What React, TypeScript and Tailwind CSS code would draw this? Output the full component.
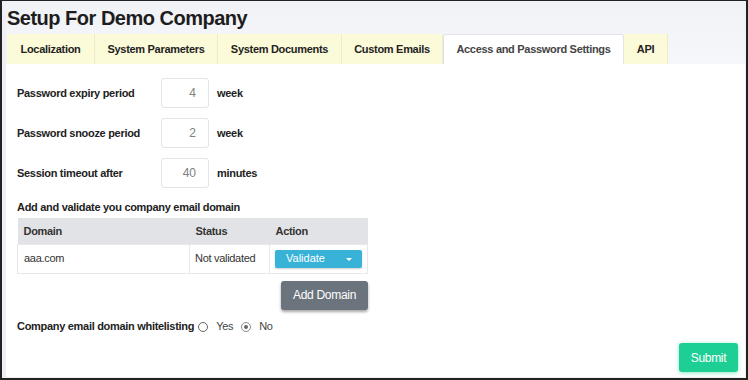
import React from "react";

const TABS = [
  { label: "Localization", w: "w-[88px]" },
  { label: "System Parameters", w: "w-[123px]" },
  { label: "System Documents", w: "w-[124px]" },
  { label: "Custom Emails", w: "w-[101px]" },
  { label: "Access and Password Settings", w: "w-[181px]", active: true },
  { label: "API", w: "w-[44px]" },
];

const PERIODS = [
  { label: "Password expiry period", value: "4", unit: "week" },
  { label: "Password snooze period", value: "2", unit: "week" },
  { label: "Session timeout after", value: "40", unit: "minutes" },
];

export default function App() {
  return (
    <div className="h-[380px] w-[748px] overflow-hidden border-t border-l-2 border-r-2 border-b-2 border-[#222] bg-white font-['Liberation_Sans',Arial,sans-serif] text-[11px] tracking-[-0.3px] text-[#222]">
      <div className="flex h-full border-l-4 border-r border-b border-[#eef0f5]">
        <div className="flex min-w-0 flex-1 flex-col">
          <div className="bg-gradient-to-b from-[#f1f2f5] to-[#f6f7fb] pl-[1px] pt-[4px]">
            <h1 className="text-[20px] font-bold leading-[26px] tracking-[-0.5px] text-[#1d1d1d]">Setup For Demo Company</h1>
            <div className="mt-[3px] flex h-[30px]">
              {TABS.map((t) => (
                <div
                  key={t.label}
                  className={`flex ${t.w} items-center justify-center font-bold ${
                    t.active
                      ? "rounded-t-[3px] border border-b-0 border-[#e2e3e7] bg-white text-[#444]"
                      : "border-r border-[#efecc6] bg-[#fcfbd9] text-[#222]"
                  }`}
                >
                  {t.label}
                </div>
              ))}
            </div>
          </div>

          <div className="relative flex-1 pl-[11px]">
            <div className="mt-[14px] flex flex-col gap-[10px]">
              {PERIODS.map((p) => (
                <div key={p.label} className="flex h-[30px] items-center font-bold">
                  <span className="w-[144px]">{p.label}</span>
                  <div className="flex h-[30px] w-[48px] items-center justify-end rounded-[3px] border border-[#e4e4e4] pr-[12px] text-[12px] font-normal tracking-normal text-[#808080]">
                    {p.value}
                  </div>
                  <span className="ml-[8px]">{p.unit}</span>
                </div>
              ))}
            </div>

            <p className="mt-[11px] font-bold leading-[16px]">Add and validate you company email domain</p>

            <table className="mt-[3px] w-[351px] border-collapse">
              <thead>
                <tr className="h-[26px] bg-[#e2e3e6] text-left font-bold text-[#333]">
                  <th className="w-[172px] pl-[6px]">Domain</th>
                  <th className="w-[80px] pl-[6px]">Status</th>
                  <th className="pl-[6px]">Action</th>
                </tr>
              </thead>
              <tbody>
                <tr className="h-[29px] text-[#333]">
                  <td className="border border-[#e8e8e8] pl-[6px]">aaa.com</td>
                  <td className="border border-[#e8e8e8] pl-[5px]">Not validated</td>
                  <td className="border border-[#e8e8e8] pl-[5px]">
                    <div className="flex h-[18px] w-[87px] items-center rounded-[2px] bg-[#38b2d7] pl-[11px] tracking-normal text-white shadow-[0_1px_2px_rgba(0,0,0,0.2)]">
                      <span className="flex-1">Validate</span>
                      <span className="mr-[10px] mt-[1px] h-0 w-0 border-x-[3px] border-t-[3px] border-x-transparent border-t-white" />
                    </div>
                  </td>
                </tr>
              </tbody>
            </table>

            <div className="flex w-[351px] justify-end pt-[7px]">
              <button className="h-[29px] w-[87px] rounded-[3px] bg-[#6b737c] text-[12px] text-white shadow-[0_2px_3px_rgba(0,0,0,0.35)]">
                Add Domain
              </button>
            </div>

            <div className="mt-[9px] flex h-[16px] items-center">
              <span className="font-bold">Company email domain whitelisting</span>
              <span className="ml-[4px] h-[10px] w-[10px] rounded-full border border-[#666]" />
              <span className="ml-[8px] text-[#444]">Yes</span>
              <span className="ml-[8px] flex h-[10px] w-[10px] items-center justify-center rounded-full border border-[#888]">
                <span className="h-[4px] w-[4px] rounded-full bg-[#666]" />
              </span>
              <span className="ml-[8px] text-[#444]">No</span>
            </div>

            <div className="absolute bottom-[5px] right-[7px]">
              <button className="h-[29px] w-[59px] rounded-[3px] bg-[#1ecf95] text-[12px] text-white shadow-[0_1px_4px_rgba(30,207,149,0.5)]">
                Submit
              </button>
            </div>
          </div>
        </div>
      </div>
    </div>
  );
}
